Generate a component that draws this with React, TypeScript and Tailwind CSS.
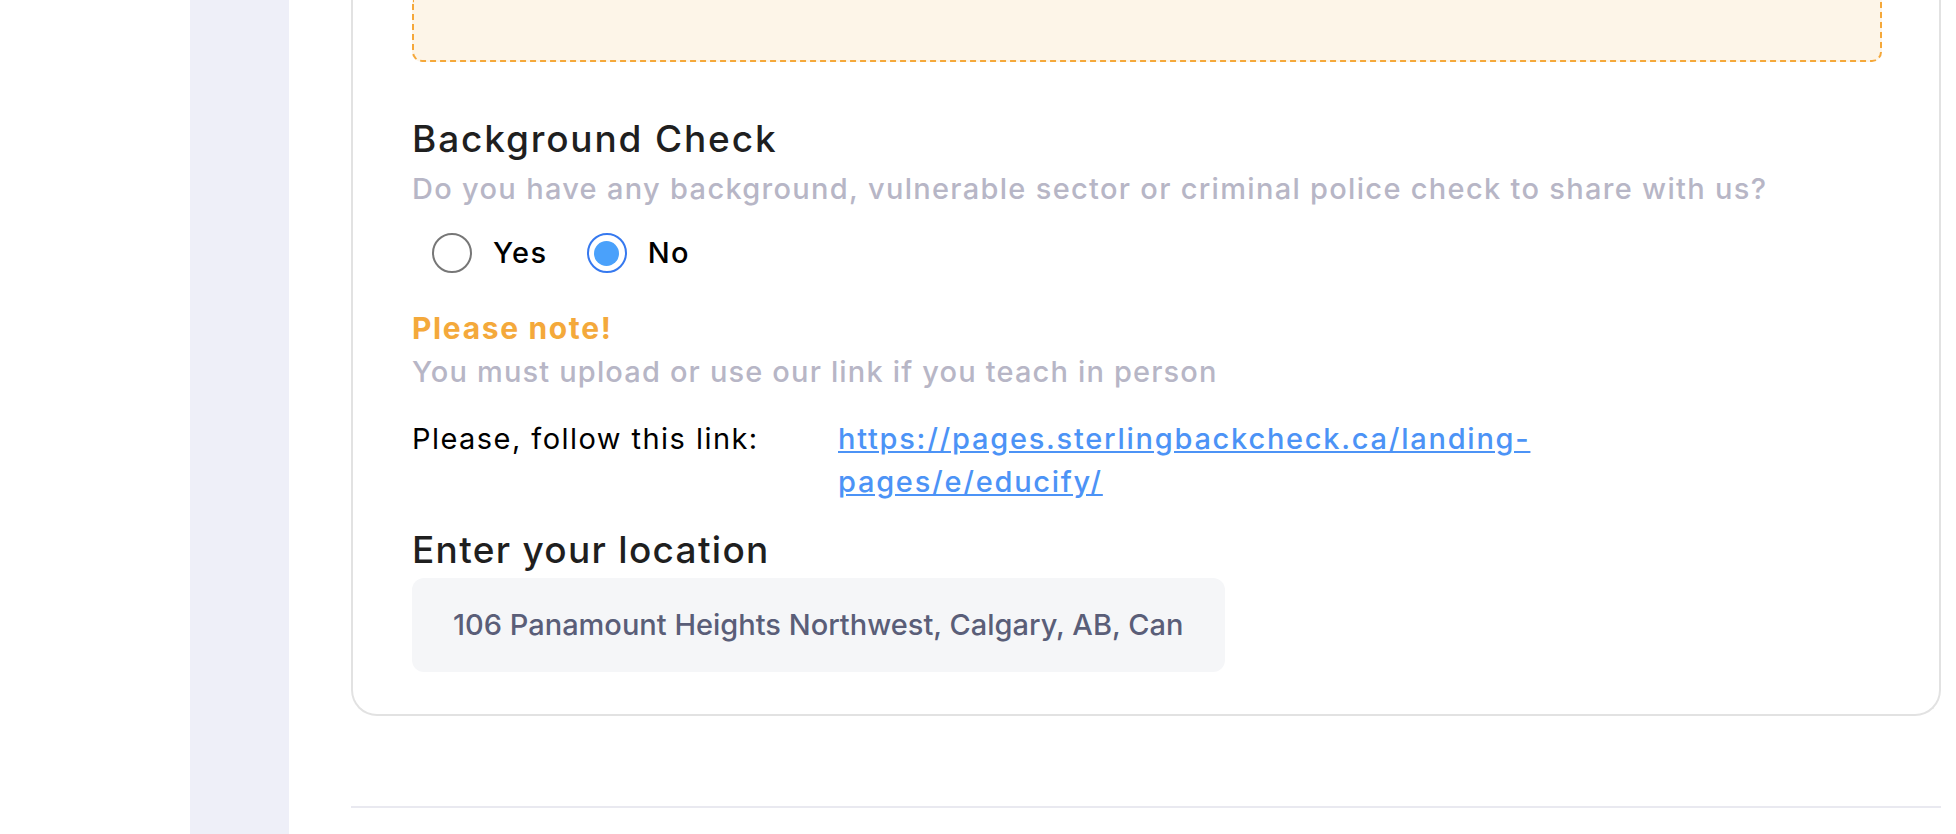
import React, { useState } from 'react';

const font = { fontFamily: 'Inter, "Noto Sans", sans-serif' };

const Radio: React.FC<{ checked: boolean; label: string; onClick: () => void }> = ({ checked, label, onClick }) => (
  <button type="button" onClick={onClick} className="flex items-center gap-[21px]">
    {checked ? (
      <span className="flex h-[40px] w-[40px] items-center justify-center rounded-full border-2 border-[#3679ef] bg-white">
        <span className="h-[25px] w-[25px] rounded-full bg-[#4aa1fb]" />
      </span>
    ) : (
      <span className="h-[40px] w-[40px] rounded-full border-2 border-[#777777] bg-white" />
    )}
    <span className="text-[29px] font-medium leading-[40px] tracking-[0.05em] text-black">{label}</span>
  </button>
);

const App: React.FC = () => {
  const [hasCheck, setHasCheck] = useState<'yes' | 'no'>('no');

  return (
    <div className="flex min-h-screen bg-white" style={font}>
      <div className="w-[190px] shrink-0" />
      <div className="w-[99px] shrink-0 bg-[#eeeff8]" />

      <div className="flex-1 pl-[62px] pr-[15px]">
        {/* form card, scrolled so the top is off screen */}
        <div className="rounded-b-[26px] border-2 border-t-0 border-[#e2e2e2] pl-[59px] pr-[57px] pb-[42px]">
          <div className="h-[62px] rounded-b-[10px] border-2 border-t-0 border-dashed border-[#f5a83a] bg-[#fdf5e8]" />

          <h2 className="mt-[55px] text-[37px] font-medium leading-[44px] tracking-[0.05em] text-[#1f1f1f]">
            Background Check
          </h2>
          <p className="mt-[10px] text-[29px] font-medium leading-[36px] tracking-[0.045em] text-[#b7b6c6]">
            Do you have any background, vulnerable sector or criminal police check to share with us?
          </p>

          <div className="mt-[26px] ml-[20px] flex items-center gap-[39px]">
            <Radio checked={hasCheck === 'yes'} label="Yes" onClick={() => setHasCheck('yes')} />
            <Radio checked={hasCheck === 'no'} label="No" onClick={() => setHasCheck('no')} />
          </div>

          <p className="mt-[34px] text-[30px] font-bold leading-[43px] tracking-[0.055em] text-[#f4a93b]">Please note!</p>
          <p className="text-[29px] font-medium leading-[43px] tracking-[0.04em] text-[#b7b6c6]">
            You must upload or use our link if you teach in person
          </p>

          <div className="mt-[24px] flex">
            <span className="w-[426px] shrink-0 text-[29px] leading-[43px] tracking-[0.05em] text-black">
              Please, follow this link:
            </span>
            <a
              href="https://pages.sterlingbackcheck.ca/landing-pages/e/educify/"
              className="w-[760px] text-[29px] font-medium leading-[43px] tracking-[0.06em] text-[#4c93f6] underline"
            >
              https://pages.sterlingbackcheck.ca/landing-pages/e/educify/
            </a>
          </div>

          <h2 className="mt-[25px] text-[37px] font-medium leading-[44px] tracking-[0.035em] text-[#1f1f1f]">
            Enter your location
          </h2>
          <div className="mt-[6px] flex h-[94px] w-[813px] items-center overflow-hidden rounded-[12px] bg-[#f5f6f8] pl-[41px] pr-[40px]">
            <span className="whitespace-nowrap text-[29px] font-medium text-[#5a5e78]">
              106 Panamount Heights Northwest, Calgary, AB, Can
            </span>
          </div>
        </div>

        <div className="mt-[90px] h-[2px] bg-[#e9e9f0]" />
      </div>
    </div>
  );
};

export default App;
